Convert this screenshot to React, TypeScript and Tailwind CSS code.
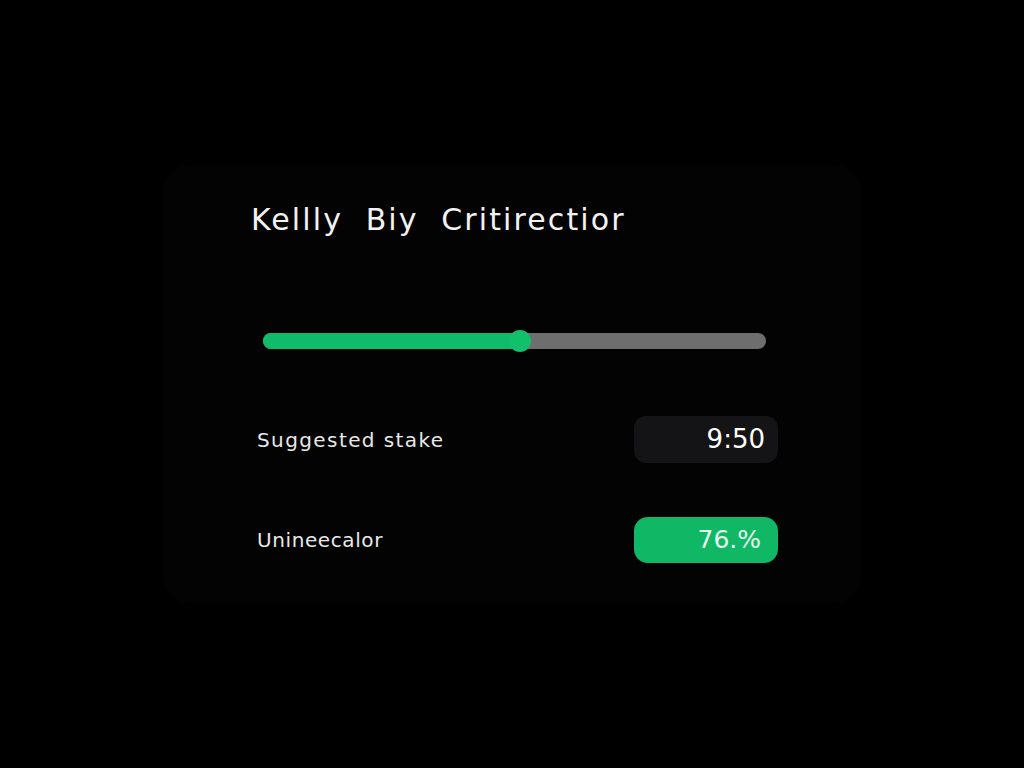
export default function App() {
  const value = 51; // percent of slider

  return (
    <div className="min-h-screen w-full bg-black flex items-center justify-center" style={{ fontFamily: '"DejaVu Sans", "Noto Sans", sans-serif' }}>
      <div className="w-[700px] h-[440px] rounded-[32px] bg-[#030303] flex flex-col pt-[38px] pl-[89px] pr-[84px]">
        <h1 className="text-[30px] leading-[36px] text-[#f2f2f2] tracking-[2.1px] [word-spacing:11px]">
          Kellly Biy Critirectior
        </h1>

        {/* slider */}
        <div className="mt-[95px] ml-[12px] mr-[12px] relative h-[16px] rounded-full bg-[#6e6e6e]">
          <div className="h-full rounded-full bg-[#10bc69]" style={{ width: `${value}%` }} />
          <div
            className="absolute top-1/2 -translate-y-1/2 -translate-x-1/2 w-[22px] h-[22px] rounded-full bg-[#12c06c]"
            style={{ left: `${value}%` }}
          />
        </div>

        <div className="mt-[67px] flex items-center justify-between pl-[6px]">
          <span className="text-[20px] tracking-[1.4px] text-[#e8e8e8]">Suggested stake</span>
          <div className="w-[144px] h-[47px] rounded-[12px] bg-[#141416] flex items-center justify-end pr-[13px]">
            <span className="text-[26px] text-white">9:50</span>
          </div>
        </div>

        <div className="mt-[54px] flex items-center justify-between pl-[6px]">
          <span className="text-[20px] tracking-[0.6px] text-[#e8e8e8]">Unineecalor</span>
          <div className="w-[144px] h-[46px] rounded-[14px] bg-[#10b866] flex items-center justify-end pr-[17px]">
            <span className="text-[25px] text-[#e6f7ee]">76.%</span>
          </div>
        </div>
      </div>
    </div>
  );
}
